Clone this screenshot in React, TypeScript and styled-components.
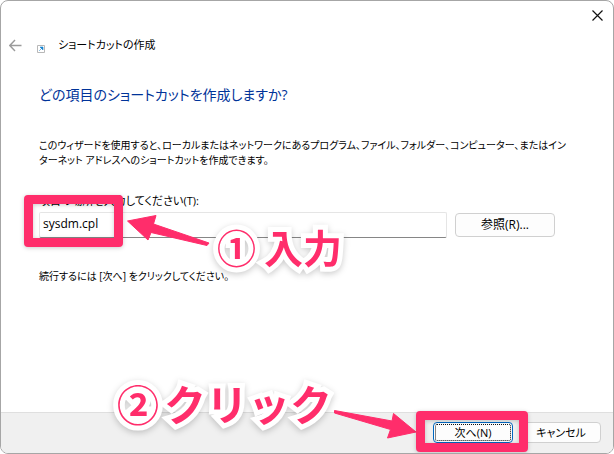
import React from "react";
import styled, { createGlobalStyle } from "styled-components";

const PINK = "#ff2d6b";

const GlobalStyle = createGlobalStyle`
  *, *::before, *::after { box-sizing: border-box; }
  body {
    margin: 0;
    background: #fff;
    color: #000;
    font-family: "Open Sans", "Noto Sans CJK JP", sans-serif;
    font-size: 12px;
    line-height: 16px;
    font-feature-settings: "palt";
  }
  button, input { font: inherit; color: inherit; font-feature-settings: inherit; }
`;

const Dialog = styled.main`
  display: flex;
  flex-direction: column;
  min-height: 100vh;
  border: 1px solid #a6a6a6;
  border-radius: 8px;
  overflow: hidden;
  background: #fff;
`;

const TitleBar = styled.div`
  display: flex;
  justify-content: flex-end;
  padding: 8px 9px 0 0;
`;

const IconButton = styled.button`
  display: flex;
  padding: 0;
  border: 0;
  background: none;
`;

const Header = styled.header`
  display: flex;
  align-items: center;
  padding: 15px 8px 0;
`;

const ShortcutIcon = styled.svg`
  margin: 7px 13px 0 15px;
`;

const Title = styled.div`
  font-size: 11px;
`;

const Content = styled.section`
  flex: 1;
  padding: 30px 38px 0;
`;

const Heading = styled.h1`
  margin: 0;
  color: #003399;
  font-size: 14px;
  font-weight: 400;
  line-height: 24px;
`;

const Paragraph = styled.p`
  margin: 31px 0 0;
  line-height: 15px;
  font-size: 10px;
`;

const Line = styled.span`
  display: block;
`;

const Label = styled.label`
  display: block;
  margin-top: 25px;
  font-size: 11px;
`;

const FieldRow = styled.div`
  position: relative;
  display: flex;
  align-items: center;
  gap: 8px;
  margin: 3px 20px 0 0;
`;

const TextInput = styled.input`
  flex: 1;
  min-width: 0;
  height: 26px;
  padding: 0 3px 4px;
  border: 1px solid #e5e5e5;
  border-bottom-color: #868686;
  border-radius: 2px;
  background: #fff;
  font-size: 12px;
  outline: 0;
`;

const Button = styled.button<{ $width: number; $tall?: boolean }>`
  width: ${(p) => p.$width}px;
  height: ${(p) => (p.$tall ? 24 : 21)}px;
  padding: 0;
  border: 1px solid #d0d0d0;
  border-radius: 4px;
  background: #fdfdfd;
  font-size: ${(p) => (p.$tall ? 12 : 11)}px;
  line-height: 16px;
`;

const DefaultButton = styled(Button)`
  border-color: #0067c0;
  outline: 1px dotted #111;
  outline-offset: -3px;
`;

const Footer = styled.footer`
  position: relative;
  display: flex;
  justify-content: flex-end;
  gap: 8px;
  padding: 9px 12px 10px;
  border-top: 1px solid #dfdfdf;
  background: #f0f0f0;
`;

const Marker = styled.div`
  position: absolute;
  border: 9px solid ${PINK};
  border-radius: 4px;
  filter: drop-shadow(0 1px 2px rgba(0, 0, 0, 0.2));
  pointer-events: none;
`;

const InputMarker = styled(Marker)`
  left: -15px;
  top: -17px;
  width: 99px;
  height: 52px;
`;

const NextMarker = styled(Marker)`
  right: 85px;
  top: -2px;
  width: 112px;
  height: 41px;
`;

const Arrow = styled.svg`
  position: absolute;
  fill: ${PINK};
  stroke: ${PINK};
  stroke-width: 1;
  stroke-linejoin: round;
  overflow: visible;
  pointer-events: none;
`;

const InputArrow = styled(Arrow)`
  left: 88px;
  top: 3px;
`;

const NextArrow = styled(Arrow)`
  right: 196px;
  top: -3px;
`;

const Callout = styled.div`
  position: absolute;
  display: flex;
  color: ${PINK};
  font-family: "Noto Sans CJK JP", sans-serif;
  font-weight: 700;
  line-height: 48px;
  font-feature-settings: normal;
  white-space: nowrap;
  -webkit-text-stroke: 10px #fff;
  paint-order: stroke fill;
  stroke-linejoin: round;
  filter: drop-shadow(0 2px 3px rgba(0, 0, 0, 0.2));
  pointer-events: none;
`;

const InputCallout = styled(Callout)`
  left: 178px;
  top: 10px;
  gap: 8px;
  font-size: 39px;
`;

const NextCallout = styled(Callout)`
  right: 281px;
  top: -34px;
  gap: 5px;
  font-size: 42px;
`;

export default function App() {
  return (
    <>
      <GlobalStyle />
      <Dialog>
        <TitleBar>
          <IconButton aria-label="閉じる">
            <svg width="13" height="13" viewBox="0 0 13 13" stroke="#111" strokeWidth="1.2">
              <path d="M1.5 1.5l10 10M11.5 1.5l-10 10" />
            </svg>
          </IconButton>
        </TitleBar>
        <Header>
          <IconButton aria-label="戻る">
            <svg width="13" height="13" viewBox="0 0 13 13" fill="none" stroke="#9b9b9b" strokeWidth="1.4">
              <path d="M12.5 6.5H1M6 1L.8 6.5 6 12" />
            </svg>
          </IconButton>
          <ShortcutIcon width="8" height="8" viewBox="0 0 8 8" fill="none">
            <path d="M.5 .5h7v7h-7z" fill="#fff" stroke="#b8b8b8" />
            <path d="M3 2h3v3zM4.6 3.4L2.2 5.8" fill="#1683d0" stroke="#1683d0" strokeWidth=".6" />
          </ShortcutIcon>
          <Title>ショートカットの作成</Title>
        </Header>
        <Content>
          <Heading>どの項目のショートカットを作成しますか?</Heading>
          <Paragraph>
            <Line>
              このウィザードを使用すると、ローカルまたはネットワークにあるプログラム、ファイル、フォルダー、コンピューター、またはイン
            </Line>
            <Line>ターネット アドレスへのショートカットを作成できます。</Line>
          </Paragraph>
          <Label htmlFor="location">項目の場所を入力してください(T):</Label>
          <FieldRow>
            <TextInput id="location" type="text" defaultValue="sysdm.cpl" />
            <Button $width={100} $tall>参照(R)...</Button>
            <InputMarker />
            <InputCallout>
              <span>①</span>
              <span>入力</span>
            </InputCallout>
            <InputArrow width="83" height="32" viewBox="0 0 83 32">
              <path d="M.5 6L29 .5 26.500 9 82 28 80 30.500 24 17.500 21 25z" />
            </InputArrow>
          </FieldRow>
          <Paragraph>続行するには [次へ] をクリックしてください。</Paragraph>
        </Content>
        <Footer>
          <DefaultButton $width={80}>次へ(N)</DefaultButton>
          <Button $width={80}>キャンセル</Button>
          <NextCallout>
            <span>②</span>
            <span>クリック</span>
          </NextCallout>
          <NextArrow width="83" height="29" viewBox="0 0 83 29">
            <path d="M.5 .5L58 11 59.500 3.500 82 22 53.500 28 56.500 19.500 .5 3z" />
          </NextArrow>
          <NextMarker />
        </Footer>
      </Dialog>
    </>
  );
}
